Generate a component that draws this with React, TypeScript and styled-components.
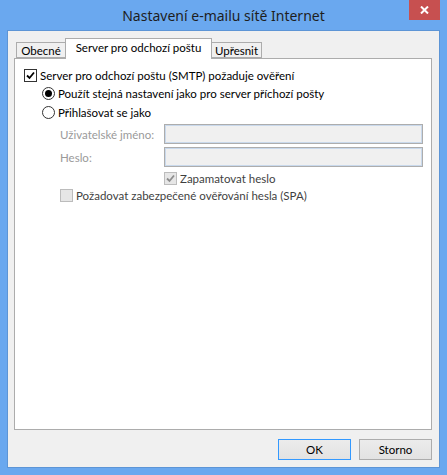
import React from "react";
import styled, { createGlobalStyle } from "styled-components";

const GlobalStyle = createGlobalStyle`
  html, body {
    margin: 0;
    padding: 0;
    background: #6aa8ef;
  }
  body {
    font-family: Lato, "Noto Sans", sans-serif;
    font-size: 11.5px;
  }
`;

const Window = styled.div`
  width: 447px;
  height: 475px;
  background: #6aa8ef;
  display: flex;
  flex-direction: column;
  box-sizing: border-box;
`;

const TitleBar = styled.div`
  position: relative;
  height: 31px;
  display: flex;
  align-items: center;
  justify-content: center;
`;

const Title = styled.div`
  font-family: "Noto Sans", sans-serif;
  font-size: 14px;
  color: #1e1e1e;
  margin-top: -1px;
`;

const CloseButton = styled.div`
  position: absolute;
  top: 0;
  right: 7px;
  width: 31px;
  height: 20px;
  background: #c75050;
  display: flex;
  align-items: center;
  justify-content: center;
`;

const Client = styled.div`
  margin: 0 8px 8px 8px;
  flex: 1;
  background: #f0f0f0;
  display: flex;
  flex-direction: column;
  padding: 7px 7px 0 6px;
  box-sizing: border-box;
  box-shadow: 0 0 0 1px #5d95d6;
`;

const TabStrip = styled.div`
  display: flex;
  align-items: flex-end;
  height: 20px;
  padding-left: 2px;
  position: relative;
  z-index: 1;
`;

const Tab = styled.div<{ $active?: boolean; $w: number }>`
  box-sizing: border-box;
  width: ${(p) => p.$w}px;
  height: ${(p) => (p.$active ? "21px" : "16px")};
  margin-bottom: ${(p) => (p.$active ? "-1px" : "0")};
  margin-left: ${(p) => (p.$active ? "-1px" : "0")};
  margin-right: ${(p) => (p.$active ? "-1px" : "0")};
  border: 1px solid #acacac;
  border-bottom: ${(p) => (p.$active ? "none" : "1px solid #acacac")};
  background: ${(p) => (p.$active ? "#ffffff" : "#f0f0f0")};
  color: #000;
  display: flex;
  justify-content: center;
  align-items: ${(p) => (p.$active ? "flex-start" : "center")};
  padding-top: ${(p) => (p.$active ? "2px" : "0")};
  white-space: nowrap;
  position: relative;
  z-index: ${(p) => (p.$active ? 2 : 1)};
`;

const Panel = styled.div`
  height: 372px;
  width: 418px;
  box-sizing: border-box;
  border: 1px solid #acacac;
  background: #ffffff;
  padding: 10px 0 0 9px;
  display: flex;
  flex-direction: column;
`;

const Row = styled.label<{ $indent?: number; $gap?: number; $disabled?: boolean }>`
  display: flex;
  align-items: center;
  height: 13px;
  margin-left: ${(p) => p.$indent ?? 0}px;
  margin-top: ${(p) => p.$gap ?? 0}px;
  color: ${(p) => (p.$disabled ? "#3f3f3f" : "#000")};
  white-space: nowrap;
`;

const Box = styled.span<{ $disabled?: boolean }>`
  width: 13px;
  height: 13px;
  box-sizing: border-box;
  border: 1px solid ${(p) => (p.$disabled ? "#bcbcbc" : "#333333")};
  background: ${(p) => (p.$disabled ? "#e6e6e6" : "#ffffff")};
  margin-right: 3px;
  display: flex;
  align-items: center;
  justify-content: center;
  flex: none;
`;

const Radio = styled.span<{ $checked?: boolean }>`
  width: 13px;
  height: 13px;
  box-sizing: border-box;
  border: 1px solid #333333;
  border-radius: 50%;
  background: #ffffff;
  margin-right: 3px;
  display: flex;
  align-items: center;
  justify-content: center;
  flex: none;
  &::after {
    content: "";
    display: ${(p) => (p.$checked ? "block" : "none")};
    width: 7px;
    height: 7px;
    border-radius: 50%;
    background: #000;
  }
`;

const FieldRow = styled.div<{ $gap?: number }>`
  display: flex;
  align-items: center;
  margin-left: 36px;
  margin-top: ${(p) => p.$gap ?? 0}px;
  height: 20px;
`;

const FieldLabel = styled.span`
  width: 104px;
  color: #9a9a9a;
  white-space: nowrap;
`;

const Input = styled.div`
  width: 259px;
  height: 20px;
  box-sizing: border-box;
  border: 1px solid #adadad;
  box-shadow: inset 0 0 0 1px #c9d9ec;
  background: #f0f0f0;
`;

const Footer = styled.div`
  display: flex;
  justify-content: flex-end;
  gap: 8px;
  margin-top: 9px;
`;

const Button = styled.div<{ $default?: boolean }>`
  width: 73px;
  height: 21px;
  box-sizing: border-box;
  border: 1px solid ${(p) => (p.$default ? "#3399ff" : "#acacac")};
  background: linear-gradient(#ececec, #e2e2e2);
  display: flex;
  align-items: center;
  justify-content: center;
  color: #000;
`;

const Check = ({ color }: { color: string }) => (
  <svg width="9" height="9" viewBox="0 0 9 9">
    <path d="M1 4.5 L3.5 7 L8 1.5" stroke={color} strokeWidth="1.8" fill="none" />
  </svg>
);

export default function App() {
  return (
    <>
      <GlobalStyle />
      <Window>
        <TitleBar>
          <Title>Nastavení e-mailu sítě Internet</Title>
          <CloseButton>
            <svg width="9" height="8" viewBox="0 0 9 8">
              <path d="M1 0.5 L8 7.5 M8 0.5 L1 7.5" stroke="#fff" strokeWidth="2" />
            </svg>
          </CloseButton>
        </TitleBar>
        <Client>
          <TabStrip>
            <Tab $w={50}>Obecné</Tab>
            <Tab $w={147} $active>
              Server pro odchozí poštu
            </Tab>
            <Tab $w={51}>Upřesnit</Tab>
          </TabStrip>
          <Panel>
            <Row>
              <Box>
                <Check color="#000" />
              </Box>
              Server pro odchozí poštu (SMTP) požaduje ověření
            </Row>
            <Row $indent={18} $gap={5}>
              <Radio $checked />
              Použít stejná nastavení jako pro server příchozí pošty
            </Row>
            <Row $indent={18} $gap={6}>
              <Radio />
              Přihlašovat se jako
            </Row>
            <FieldRow $gap={5}>
              <FieldLabel>Uživatelské jméno:</FieldLabel>
              <Input />
            </FieldRow>
            <FieldRow $gap={3}>
              <FieldLabel>Heslo:</FieldLabel>
              <Input />
            </FieldRow>
            <Row $indent={140} $gap={5} $disabled>
              <Box $disabled>
                <Check color="#8d8d8d" />
              </Box>
              Zapamatovat heslo
            </Row>
            <Row $indent={36} $gap={4} $disabled>
              <Box $disabled />
              Požadovat zabezpečené ověřování hesla (SPA)
            </Row>
          </Panel>
          <Footer>
            <Button $default>OK</Button>
            <Button>Storno</Button>
          </Footer>
        </Client>
      </Window>
    </>
  );
}
